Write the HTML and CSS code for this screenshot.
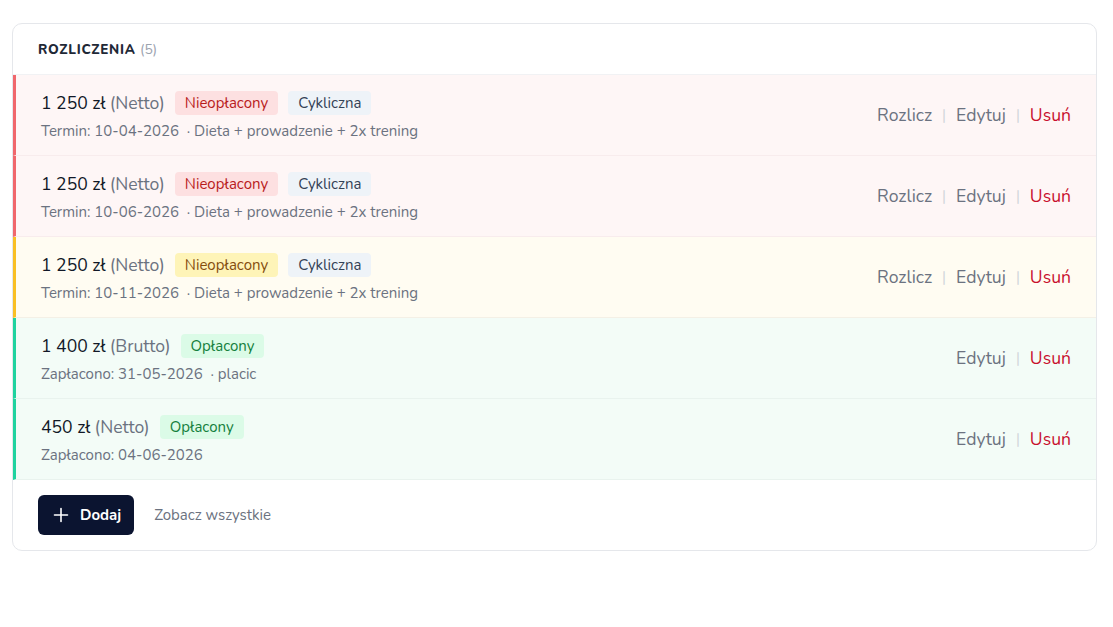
FILE: index.html
```html
<!DOCTYPE html>
<html lang="pl">
<head>
<meta charset="utf-8">
<link rel="stylesheet" href="styles.css">
</head>
<body>
<div class="page">
  <section class="card">
    <header class="card-head">
      <h2 class="title">ROZLICZENIA <span class="count">(5)</span></h2>
    </header>
    <ul class="list">
      <li class="row row-red">
        <div class="info">
          <div class="line1">
            <span class="amount">1 250 zł</span> <span class="kind">(Netto)</span>
            <span class="badge badge-red">Nieopłacony</span>
            <span class="badge badge-slate">Cykliczna</span>
          </div>
          <div class="line2">Termin: 10-04-2026 &nbsp;· Dieta + prowadzenie + 2x trening</div>
        </div>
        <div class="actions">
          <a class="act">Rozlicz</a><span class="sep">|</span><a class="act">Edytuj</a><span class="sep">|</span><a class="act del">Usuń</a>
        </div>
      </li>
      <li class="row row-red">
        <div class="info">
          <div class="line1">
            <span class="amount">1 250 zł</span> <span class="kind">(Netto)</span>
            <span class="badge badge-red">Nieopłacony</span>
            <span class="badge badge-slate">Cykliczna</span>
          </div>
          <div class="line2">Termin: 10-06-2026 &nbsp;· Dieta + prowadzenie + 2x trening</div>
        </div>
        <div class="actions">
          <a class="act">Rozlicz</a><span class="sep">|</span><a class="act">Edytuj</a><span class="sep">|</span><a class="act del">Usuń</a>
        </div>
      </li>
      <li class="row row-yellow">
        <div class="info">
          <div class="line1">
            <span class="amount">1 250 zł</span> <span class="kind">(Netto)</span>
            <span class="badge badge-yellow">Nieopłacony</span>
            <span class="badge badge-slate">Cykliczna</span>
          </div>
          <div class="line2">Termin: 10-11-2026 &nbsp;· Dieta + prowadzenie + 2x trening</div>
        </div>
        <div class="actions">
          <a class="act">Rozlicz</a><span class="sep">|</span><a class="act">Edytuj</a><span class="sep">|</span><a class="act del">Usuń</a>
        </div>
      </li>
      <li class="row row-green">
        <div class="info">
          <div class="line1">
            <span class="amount">1 400 zł</span> <span class="kind">(Brutto)</span>
            <span class="badge badge-green">Opłacony</span>
          </div>
          <div class="line2">Zapłacono: 31-05-2026 &nbsp;· placic</div>
        </div>
        <div class="actions">
          <a class="act">Edytuj</a><span class="sep">|</span><a class="act del">Usuń</a>
        </div>
      </li>
      <li class="row row-green">
        <div class="info">
          <div class="line1">
            <span class="amount">450 zł</span> <span class="kind">(Netto)</span>
            <span class="badge badge-green">Opłacony</span>
          </div>
          <div class="line2">Zapłacono: 04-06-2026</div>
        </div>
        <div class="actions">
          <a class="act">Edytuj</a><span class="sep">|</span><a class="act del">Usuń</a>
        </div>
      </li>
    </ul>
    <footer class="card-foot">
      <button class="btn-add">
        <svg class="plus" width="16" height="16" viewBox="0 0 16 16" aria-hidden="true"><path d="M8 1.5v13M1.5 8h13" stroke="#fff" stroke-width="1.6" stroke-linecap="round" fill="none"/></svg>
        <span>Dodaj</span>
      </button>
      <a class="see-all">Zobacz wszystkie</a>
    </footer>
  </section>
</div>
</body>
</html>
```
FILE: styles.css
```css
* { box-sizing: border-box; }
html, body { margin: 0; padding: 0; background: #fff; }
body {
  font-family: "Nunito", "Open Sans", "Noto Sans", sans-serif;
  color: #111827;
}
.page { padding: 23px 16px 0 12px; }
.card {
  width: 1085px;
  border: 1px solid #e5e7eb;
  border-radius: 10px;
  background: #fff;
  overflow: hidden;
}
.card-head {
  height: 51px;
  display: flex;
  align-items: center;
  padding: 0 25px;
  border-bottom: 1px solid #f1f2f4;
}
.title {
  margin: 0;
  font-size: 13.5px;
  font-weight: 800;
  letter-spacing: 0.7px;
  color: #1f2937;
}
.count { font-size: 14px; font-weight: 400; color: #9ca3af; letter-spacing: 0; }
.list { list-style: none; margin: 0; padding: 0; }
.row {
  height: 81px;
  display: flex;
  align-items: center;
  justify-content: space-between;
  padding: 0 25px 0 25px;
  border-left: 3px solid transparent;
  border-bottom: 1px solid #f1f1f3;
}
.row-red { background: #fef6f6; border-left-color: #f0676c; border-bottom-color: #f8eced; }
.row-yellow { background: #fffcf2; border-left-color: #f9bf24; border-bottom-color: #f4f0e6; }
.row-green { background: #f3fcf7; border-left-color: #1fd39f; border-bottom-color: #e9f3ee; }
.info { display: flex; flex-direction: column; gap: 6px; padding-top: 2px; }
.line1 { display: flex; align-items: center; height: 24px; font-size: 17.6px; }
.amount { color: #111827; }
.kind { color: #6b7280; margin-left: 4px; }
.badge {
  display: inline-flex;
  align-items: center;
  height: 24px;
  padding: 0 10px;
  border-radius: 4px;
  font-size: 15px;
  margin-left: 10px;
}
.badge-red { background: #fde0e1; color: #b91c1c; }
.badge-yellow { background: #fef4b8; color: #854d0e; }
.badge-slate { background: #eef3f8; color: #334155; }
.badge-green { background: #dbfbe7; color: #15803d; }
.line2 { font-size: 15px; line-height: 21px; color: #6b7280; }
.actions { display: flex; align-items: center; font-size: 17.6px; }
.act { color: #6b7280; cursor: pointer; }
.act.del { color: #c8102e; }
.sep { color: #d1d5db; margin: 0 10px; font-size: 15px; }
.card-foot {
  height: 70px;
  display: flex;
  align-items: center;
  padding: 0 25px;
}
.btn-add {
  display: inline-flex;
  align-items: center;
  gap: 11px;
  height: 40px;
  padding: 0 13px 0 15px;
  border: none;
  border-radius: 6px;
  background: #0b1430;
  color: #fff;
  font-family: inherit;
  font-size: 15px;
  font-weight: 700;
}
.plus { display: block; }
.see-all { margin-left: 20px; font-size: 15px; color: #6b7280; cursor: pointer; }
```
